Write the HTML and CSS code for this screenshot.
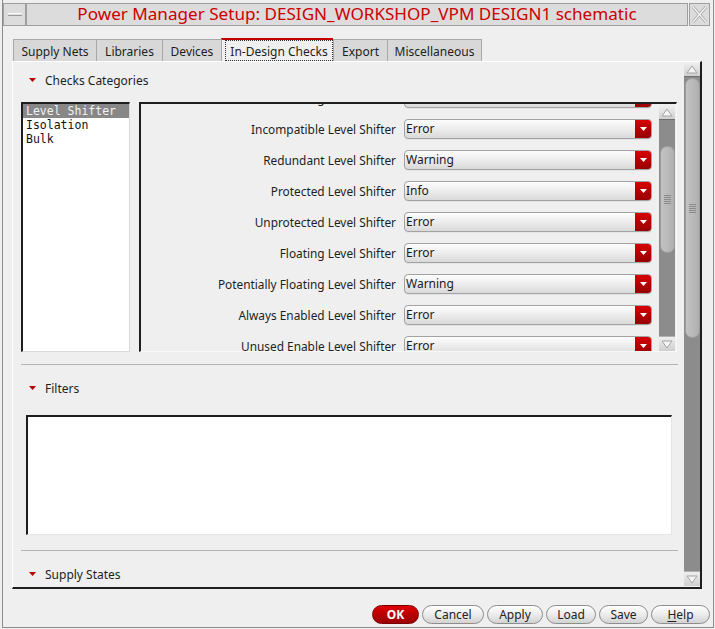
FILE: index.html
```html
<!DOCTYPE html>
<html>
<head>
<meta charset="utf-8">
<link rel="stylesheet" href="styles.css">
</head>
<body>
<div class="window">
  <div class="titlebar">
    <div class="tb-btn tb-min"><span class="min-bar"></span></div>
    <div class="tb-title">Power Manager Setup: DESIGN_WORKSHOP_VPM DESIGN1 schematic</div>
    <div class="tb-btn tb-close">
      <svg width="19" height="21" viewBox="0 0 19 21"><path d="M3 3 L16 18 M16 3 L3 18" stroke="#a8a8a8" stroke-width="3" fill="none"/><path d="M3 3 L16 18 M16 3 L3 18" stroke="#f6f6f6" stroke-width="1.2" fill="none"/></svg>
    </div>
  </div>

  <div class="tabs">
    <div class="tab t1">Supply Nets</div>
    <div class="tab t2">Libraries</div>
    <div class="tab t3">Devices</div>
    <div class="tab t4 active"><span class="focus">In-Design Checks</span></div>
    <div class="tab t5">Export</div>
    <div class="tab t6 last">Miscellaneous</div>
  </div>

  <div class="pane">
    <div class="pane-content">
      <div class="section-head">
        <svg class="tri" width="7" height="4" viewBox="0 0 7 4"><polygon points="0,0 7,0 3.5,4" fill="#b40000"/></svg>
        <span>Checks Categories</span>
      </div>

      <div class="checks">
        <div class="list">
          <div class="item sel">Level Shifter</div>
          <div class="item">Isolation</div>
          <div class="item">Bulk</div>
        </div>

        <div class="panel">
          <div class="rows-viewport">
            <div class="rows">
              <div class="row"><div class="label">Missing Level Shifter</div><div class="dd"><div class="dd-text">Error</div><div class="dd-btn"><svg width="7" height="4" viewBox="0 0 7 4"><polygon points="0,0 7,0 3.5,4" fill="#fff"/></svg></div></div></div>
              <div class="row"><div class="label">Incompatible Level Shifter</div><div class="dd"><div class="dd-text">Error</div><div class="dd-btn"><svg width="7" height="4" viewBox="0 0 7 4"><polygon points="0,0 7,0 3.5,4" fill="#fff"/></svg></div></div></div>
              <div class="row"><div class="label">Redundant Level Shifter</div><div class="dd"><div class="dd-text">Warning</div><div class="dd-btn"><svg width="7" height="4" viewBox="0 0 7 4"><polygon points="0,0 7,0 3.5,4" fill="#fff"/></svg></div></div></div>
              <div class="row"><div class="label">Protected Level Shifter</div><div class="dd"><div class="dd-text">Info</div><div class="dd-btn"><svg width="7" height="4" viewBox="0 0 7 4"><polygon points="0,0 7,0 3.5,4" fill="#fff"/></svg></div></div></div>
              <div class="row"><div class="label">Unprotected Level Shifter</div><div class="dd"><div class="dd-text">Error</div><div class="dd-btn"><svg width="7" height="4" viewBox="0 0 7 4"><polygon points="0,0 7,0 3.5,4" fill="#fff"/></svg></div></div></div>
              <div class="row"><div class="label">Floating Level Shifter</div><div class="dd"><div class="dd-text">Error</div><div class="dd-btn"><svg width="7" height="4" viewBox="0 0 7 4"><polygon points="0,0 7,0 3.5,4" fill="#fff"/></svg></div></div></div>
              <div class="row"><div class="label">Potentially Floating Level Shifter</div><div class="dd"><div class="dd-text">Warning</div><div class="dd-btn"><svg width="7" height="4" viewBox="0 0 7 4"><polygon points="0,0 7,0 3.5,4" fill="#fff"/></svg></div></div></div>
              <div class="row"><div class="label">Always Enabled Level Shifter</div><div class="dd"><div class="dd-text">Error</div><div class="dd-btn"><svg width="7" height="4" viewBox="0 0 7 4"><polygon points="0,0 7,0 3.5,4" fill="#fff"/></svg></div></div></div>
              <div class="row"><div class="label">Unused Enable Level Shifter</div><div class="dd"><div class="dd-text">Error</div><div class="dd-btn"><svg width="7" height="4" viewBox="0 0 7 4"><polygon points="0,0 7,0 3.5,4" fill="#fff"/></svg></div></div></div>
            </div>
          </div>
          <div class="vscroll inner">
            <div class="arrow up"><svg width="16" height="13" viewBox="0 0 16 13"><polygon points="3,10 8,3 13,10" fill="#f4f4f4" stroke="#a4a4a4" stroke-width="1"/></svg></div>
            <div class="track"><div class="thumb thumb-inner"><span class="grip"></span></div></div>
            <div class="arrow down"><svg width="16" height="14" viewBox="0 0 16 14"><polygon points="3,4 8,11 13,4" fill="#f4f4f4" stroke="#a4a4a4" stroke-width="1"/></svg></div>
          </div>
        </div>
      </div>

      <div class="sep"></div>

      <div class="section-head sh-filters">
        <svg class="tri" width="7" height="4" viewBox="0 0 7 4"><polygon points="0,0 7,0 3.5,4" fill="#b40000"/></svg>
        <span>Filters</span>
      </div>
      <div class="filters-box"></div>

      <div class="sep sep2"></div>

      <div class="section-head sh-supply">
        <svg class="tri" width="7" height="4" viewBox="0 0 7 4"><polygon points="0,0 7,0 3.5,4" fill="#b40000"/></svg>
        <span>Supply States</span>
      </div>
    </div>

    <div class="vscroll outer">
      <div class="arrow up"><svg width="16" height="13" viewBox="0 0 16 13"><polygon points="3,10 8,3 13,10" fill="#f4f4f4" stroke="#a4a4a4" stroke-width="1"/></svg></div>
      <div class="track"><div class="thumb thumb-outer"><span class="grip"></span></div></div>
      <div class="arrow down"><svg width="16" height="14" viewBox="0 0 16 14"><polygon points="3,4 8,11 13,4" fill="#f4f4f4" stroke="#a4a4a4" stroke-width="1"/></svg></div>
    </div>
  </div>

  <div class="buttons">
    <div class="btn ok">OK</div>
    <div class="btn b-cancel">Cancel</div>
    <div class="btn b-apply">Apply</div>
    <div class="btn b-load">Load</div>
    <div class="btn b-save">Save</div>
    <div class="btn b-help"><u>H</u>elp</div>
  </div>
</div>
</body>
</html>
```

FILE: styles.css
```css
html, body {
  margin: 0;
  padding: 0;
}
body {
  width: 715px;
  height: 629px;
  background: #efefef;
  font-family: "Noto Sans", sans-serif;
  font-size: 12px;
  color: #1e1e1e;
  overflow: hidden;
}

.window {
  box-sizing: border-box;
  width: 712px;
  height: 628px;
  margin-left: 2px;
  border: 1px solid #8c8c8c;
  border-top: 0;
  padding-top: 3px;
  display: flex;
  flex-direction: column;
}

/* title bar */
.titlebar {
  display: flex;
  height: 23px;
  padding-right: 3px;
  flex-shrink: 0;
}
.tb-btn {
  box-sizing: border-box;
  height: 23px;
  border: 1px solid #9e9e9e;
  background: #dcdcdc;
  display: flex;
  align-items: center;
  justify-content: center;
}
.tb-min {
  width: 23px;
}
.min-bar {
  display: block;
  width: 14px;
  height: 1px;
  border-top: 1px solid #fbfbfb;
  border-bottom: 1px solid #9a9a9a;
}
.tb-title {
  box-sizing: border-box;
  flex: 1;
  height: 23px;
  border: 1px solid #9e9e9e;
  background: #dcdcdc;
  color: #cc0000;
  font-size: 17.1px;
  line-height: 20px;
  text-align: center;
  white-space: nowrap;
}
.tb-close {
  width: 21px;
  margin-left: 1px;
}

/* tabs */
.tabs {
  display: flex;
  align-items: flex-end;
  height: 23px;
  margin-top: 12px;
  padding-left: 10px;
  flex-shrink: 0;
}
.tab {
  box-sizing: border-box;
  height: 22px;
  border: 1px solid #a8a8a8;
  border-bottom: 0;
  border-right: 0;
  background: #d8d8d8;
  text-align: center;
  padding-top: 2px;
  line-height: 20px;
  white-space: nowrap;
}
.tab.last {
  border-right: 1px solid #a8a8a8;
}
.t1 { width: 83px; }
.t2 { width: 66px; }
.t3 { width: 59px; }
.t4 { width: 112px; }
.t5 { width: 54px; }
.t6 { width: 95px; }
.tab.active {
  height: 23px;
  background: #efefef;
  border-top: 2px solid #c40000;
  padding: 0 0 0 3px;
}
.focus {
  display: block;
  box-sizing: border-box;
  height: 21px;
  padding-top: 1px;
  line-height: 19px;
  border: 1px dotted #333;
  margin-right: 0;
}

/* pane */
.pane {
  box-sizing: border-box;
  width: 690px;
  height: 528px;
  margin-left: 9px;
  border-top: 1px solid #ffffff;
  border-left: 1px solid #ffffff;
  border-right: 2px solid #1e1e1e;
  border-bottom: 2px solid #1e1e1e;
  display: flex;
  flex-shrink: 0;
}
.pane-content {
  flex: 1;
  min-width: 0;
  overflow: hidden;
}

.section-head {
  height: 36px;
  display: flex;
  align-items: center;
  padding-left: 16px;
  font-size: 12px;
  color: #1e1e1e;
}
.tri {
  margin-right: 9px;
  flex-shrink: 0;
}
.sh-filters,
.sh-supply {
  margin-top: 5px;
}

.checks {
  display: flex;
  gap: 9px;
  margin-top: 4px;
  margin-left: 8px;
  height: 250px;
}

.list {
  box-sizing: border-box;
  width: 109px;
  height: 250px;
  background: #ffffff;
  border-top: 2px solid #1e1e1e;
  border-left: 2px solid #1e1e1e;
  border-right: 1px solid #dadada;
  border-bottom: 1px solid #dadada;
  font-family: "DejaVu Sans Mono", monospace;
  font-size: 11.5px;
  color: #111;
}
.item {
  height: 14px;
  line-height: 14px;
  padding-left: 3px;
  white-space: nowrap;
}
.item.sel {
  background: #878787;
  color: #f2f2f2;
}

.panel {
  box-sizing: border-box;
  width: 538px;
  height: 250px;
  border-top: 2px solid #1e1e1e;
  border-left: 2px solid #1e1e1e;
  border-right: 1px solid #f8f8f8;
  border-bottom: 1px solid #f8f8f8;
  background: #efefef;
  display: flex;
}
.rows-viewport {
  flex: 1;
  min-width: 0;
  overflow: hidden;
}
.rows {
  margin-top: -22px;
}
.row {
  display: flex;
  align-items: center;
  height: 31px;
}
.label {
  width: 255px;
  flex-shrink: 0;
  text-align: right;
  white-space: nowrap;
  font-size: 11.85px;
  color: #1e1e1e;
}
.dd {
  box-sizing: border-box;
  width: 248px;
  height: 20px;
  margin-left: 8px;
  border: 1px solid #a2a2a2;
  border-radius: 4px;
  background: linear-gradient(#fdfdfd, #e9e9e9 60%, #d9d9d9);
  display: flex;
  overflow: hidden;
  box-shadow: 0 1px 0 #e4e4e4;
}
.dd-text {
  flex: 1;
  padding-left: 1px;
  line-height: 18px;
  color: #1a1a1a;
}
.dd-btn {
  width: 16px;
  background: linear-gradient(#d80000, #b00000 60%, #980000);
  display: flex;
  align-items: center;
  justify-content: center;
}

/* scrollbars */
.vscroll {
  width: 16px;
  display: flex;
  flex-direction: column;
  flex-shrink: 0;
}
.vscroll.inner {
  margin-right: 1px;
  padding-top: 2px;
}
.vscroll.outer {
  padding: 1px 0;
}
.arrow {
  box-sizing: border-box;
  background: linear-gradient(#eeeeee, #cfcfcf);
  display: flex;
  align-items: center;
  justify-content: center;
  flex-shrink: 0;
}
.arrow.up {
  height: 14px;
  border-bottom: 1px solid #6e6e6e;
}
.arrow.down {
  height: 15px;
  border-top: 1px solid #b0b0b0;
}
.track {
  flex: 1;
  background: #8c8c8c;
  display: flex;
  flex-direction: column;
  align-items: center;
}
.thumb {
  box-sizing: border-box;
  width: 15px;
  border: 1px solid #9c9c9c;
  border-radius: 7px;
  background: linear-gradient(90deg, #c2c2c2, #b8b8b8 60%, #aeaeae);
  display: flex;
  align-items: center;
  justify-content: center;
}
.thumb-inner {
  margin-top: 26px;
  height: 107px;
}
.thumb-outer {
  margin-top: 1px;
  height: 260px;
}
.grip {
  display: block;
  width: 7px;
  height: 9px;
  background: repeating-linear-gradient(#8a8a8a 0 1px, transparent 1px 2px);
}

.sep {
  margin-top: 12px;
  margin-left: 8px;
  width: 657px;
  border-top: 1px solid #b4b4b4;
}
.sep2 {
  margin-top: 15px;
}

.filters-box {
  box-sizing: border-box;
  width: 646px;
  height: 120px;
  margin-top: 9px;
  margin-left: 13px;
  background: #ffffff;
  border-top: 2px solid #1e1e1e;
  border-left: 2px solid #1e1e1e;
  border-right: 1px solid #e4e4e4;
  border-bottom: 1px solid #e4e4e4;
}

/* bottom buttons */
.buttons {
  display: flex;
  justify-content: flex-end;
  gap: 3px;
  padding-right: 3px;
  margin-top: 16px;
  height: 19px;
  flex-shrink: 0;
}
.btn {
  box-sizing: border-box;
  height: 19px;
  border: 1px solid #8e8e8e;
  border-radius: 10px;
  background: linear-gradient(#fefefe, #ececec 50%, #d2d2d2);
  font-size: 12px;
  line-height: 17px;
  text-align: center;
  color: #222;
}
.btn u {
  text-decoration-thickness: 1px;
  text-underline-offset: 2px;
}
.btn.ok {
  width: 47px;
  border-color: #7a0000;
  background: linear-gradient(#e00000, #b80000 50%, #9a0000);
  color: #ffffff;
  font-weight: bold;
}
.b-cancel { width: 62px; }
.b-apply { width: 56px; }
.b-load { width: 50px; }
.b-save { width: 49px; }
.b-help { width: 59px; }
```
